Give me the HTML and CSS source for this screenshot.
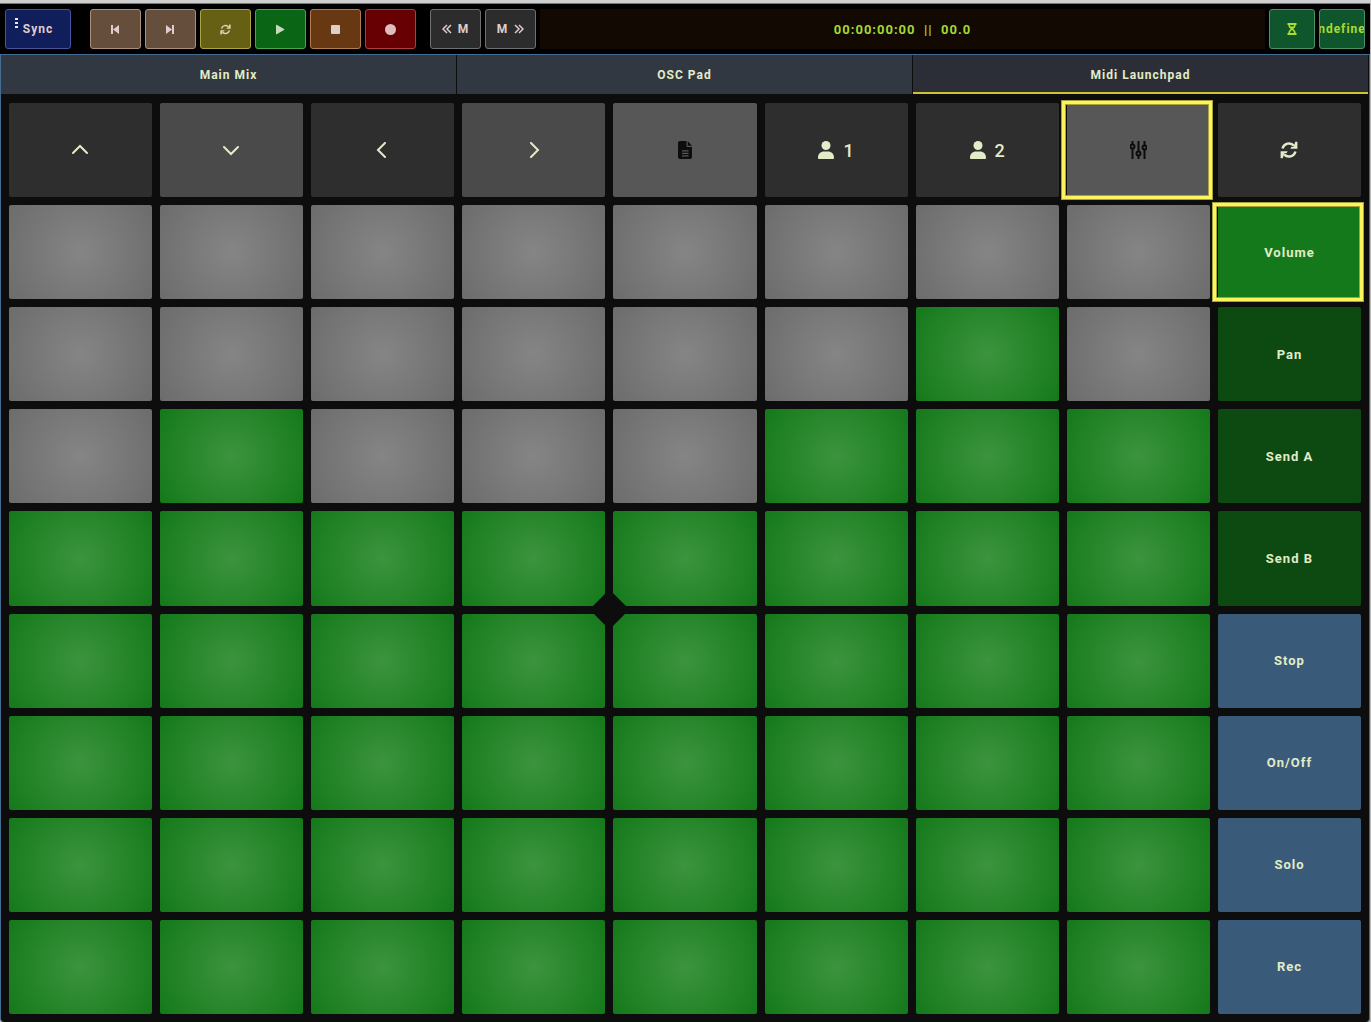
FILE: index.html
```html
<!DOCTYPE html>
<html lang="en">
<head>
<meta charset="utf-8">
<meta name="viewport" content="width=device-width, initial-scale=1">
<title>Midi Launchpad</title>
<link rel="stylesheet" href="styles.css">
</head>
<body>
<svg class="sprite" aria-hidden="true">
  <symbol id="sync" viewBox="0 0 18 18">
    <path d="M2.500 7.500A6.800 6.800 0 0 1 14 4.600M15.500 10.500A6.800 6.800 0 0 1 4 13.400" fill="none" stroke="currentColor" stroke-width="2.400"/>
    <path d="M17.400.8v7H10.300l1.200-2.100h2.300L15.200.8zM.6 17.200v-7h7.100l-1.200 2.100H4.200L2.800 17.200z"/>
  </symbol>
  <symbol id="user" viewBox="0 0 16 18">
    <circle cx="8" cy="4.500" r="4.500"/><path d="M0 18v-1.500C0 12.800 2.700 10.500 6 10.500h4c3.300 0 6 2.300 6 6V17q0 1-1 1H1q-1 0-1-1z"/>
  </symbol>
</svg>
<header class="toolbar">
  <button class="btn sync"><span class="grip"><i></i><i></i><i></i></span>Sync</button>
  <div class="group">
    <button class="btn brown" aria-label="Previous"><svg width="11" height="11" viewBox="0 0 11 11"><path d="M1 1h2v9H1zM9 1v9L3 5.500z"/></svg></button>
    <button class="btn brown" aria-label="Next"><svg width="11" height="11" viewBox="0 0 11 11"><path d="M7 1h2v9H7zM1 1v9l6-4.500z"/></svg></button>
    <button class="btn olive" aria-label="Cycle"><svg width="11" height="11"><use href="#sync"/></svg></button>
    <button class="btn play" aria-label="Play"><svg width="11" height="11" viewBox="0 0 11 11"><path d="M1 1v9q0 .5.600.3l7.500-4.300q.5-.5 0-1L1.600.7Q1 .5 1 1z"/></svg></button>
    <button class="btn stop" aria-label="Stop"><svg width="11" height="11" viewBox="0 0 11 11"><rect x="1" y="1" width="9" height="9" rx="1"/></svg></button>
    <button class="btn record" aria-label="Record"><svg width="11" height="11" viewBox="0 0 11 11"><circle cx="5.500" cy="5.500" r="5.500"/></svg></button>
  </div>
  <div class="group">
    <button class="btn marker" aria-label="Previous marker"><svg class="angles" width="10" height="10" viewBox="0 0 10 10"><path d="M5 1 1 5l4 4M9 1 5 5l4 4"/></svg>M</button>
    <button class="btn marker" aria-label="Next marker">M<svg class="angles" width="10" height="10" viewBox="0 0 10 10"><path d="m1 1 4 4-4 4M5 1l4 4-4 4"/></svg></button>
  </div>
  <output class="timecode">00:00:00:00 &nbsp;|| &nbsp;00.0</output>
  <button class="btn lime" aria-label="Wait"><svg width="10" height="12" viewBox="0 0 10 12"><path fill-rule="evenodd" d="M.5 0h9v2h-.8c0 2-1.200 3-2.500 4 1.300 1 2.500 2 2.500 4h.8v2h-9v-2h.8c0-2 1.200-3 2.500-4C2.500 5 1.300 4 1.300 2H.5zM3 2q.1 1 .6 1.600h2.800Q6.900 3 7 2zM3 10h4Q6.800 8 5 7 3.200 8 3 10z"/></svg></button>
  <button class="btn lime">undefined</button>
</header>
<main class="app">
  <nav class="tabs">
    <button class="tab">Main Mix</button>
    <button class="tab">OSC Pad</button>
    <button class="tab active">Midi Launchpad</button>
  </nav>
  <section class="grid">
    <button class="pad dark" aria-label="Up"><svg class="arrow" width="17" height="16" viewBox="0 0 17 16"><path d="m1 11 7-7 7 7"/></svg></button>
    <button class="pad mid" aria-label="Down"><svg class="arrow" width="17" height="16" viewBox="0 0 17 16"><path d="m1 5 7 7 7-7"/></svg></button>
    <button class="pad dark" aria-label="Left"><svg class="arrow" width="17" height="16" viewBox="0 0 17 16"><path d="M11 1 4 8l7 7"/></svg></button>
    <button class="pad mid" aria-label="Right"><svg class="arrow" width="17" height="16" viewBox="0 0 17 16"><path d="m6 1 7 7-7 7"/></svg></button>
    <button class="pad light" aria-label="Session"><svg width="14" height="18" viewBox="0 0 14 18"><path fill-rule="evenodd" d="M2 0h6.500v5q0 1 1 1H14v10q0 2-2 2H2q-2 0-2-2V2Q0 0 2 0zM9.700 0 14 4.800H9.700zM4 9.200v1.200h6.500V9.200zM4 11.700v1.200h6.500v-1.200zM4 14.200v1.200h6.500v-1.200z"/></svg></button>
    <button class="pad dark user"><svg width="16" height="18"><use href="#user"/></svg>1</button>
    <button class="pad dark user"><svg width="16" height="18"><use href="#user"/></svg>2</button>
    <button class="pad light selected" aria-label="Mixer"><svg class="faders" width="17" height="18" viewBox="0 0 17 18"><path d="M2.500 0v3.500M2.500 8v10M8.500 0v10M8.500 15v3M14.500 0v4.500M14.500 9v9"/><circle cx="2.500" cy="5.500" r="2"/><circle cx="8.500" cy="12.500" r="2"/><circle cx="14.500" cy="6.500" r="2"/></svg></button>
    <button class="pad dark" aria-label="Refresh"><svg width="18" height="18"><use href="#sync"/></svg></button>

    <button class="pad grey"></button><button class="pad grey"></button><button class="pad grey"></button><button class="pad grey"></button><button class="pad grey"></button><button class="pad grey"></button><button class="pad grey"></button><button class="pad grey"></button>
    <button class="pad bright selected">Volume</button>

    <button class="pad grey"></button><button class="pad grey"></button><button class="pad grey"></button><button class="pad grey"></button><button class="pad grey"></button><button class="pad grey"></button><button class="pad green"></button><button class="pad grey"></button>
    <button class="pad forest">Pan</button>

    <button class="pad grey"></button><button class="pad green"></button><button class="pad grey"></button><button class="pad grey"></button><button class="pad grey"></button><button class="pad green"></button><button class="pad green"></button><button class="pad green"></button>
    <button class="pad forest">Send A</button>

    <button class="pad green"></button><button class="pad green"></button><button class="pad green"></button><button class="pad green cut-br"></button><button class="pad green cut-bl"></button><button class="pad green"></button><button class="pad green"></button><button class="pad green"></button>
    <button class="pad forest">Send B</button>

    <button class="pad green"></button><button class="pad green"></button><button class="pad green"></button><button class="pad green cut-tr"></button><button class="pad green cut-tl"></button><button class="pad green"></button><button class="pad green"></button><button class="pad green"></button>
    <button class="pad blue">Stop</button>

    <button class="pad green"></button><button class="pad green"></button><button class="pad green"></button><button class="pad green"></button><button class="pad green"></button><button class="pad green"></button><button class="pad green"></button><button class="pad green"></button>
    <button class="pad blue">On/Off</button>

    <button class="pad green"></button><button class="pad green"></button><button class="pad green"></button><button class="pad green"></button><button class="pad green"></button><button class="pad green"></button><button class="pad green"></button><button class="pad green"></button>
    <button class="pad blue">Solo</button>

    <button class="pad green"></button><button class="pad green"></button><button class="pad green"></button><button class="pad green"></button><button class="pad green"></button><button class="pad green"></button><button class="pad green"></button><button class="pad green"></button>
    <button class="pad blue">Rec</button>
  </section>
</main>
</body>
</html>
```
FILE: styles.css
```css
* { box-sizing: border-box; }

body {
  margin: 0;
  min-height: 100vh;
  display: flex;
  flex-direction: column;
  padding-right: 1px;
  border-top: 3px solid #cfcfcf;
  background: #b9b9b9;
  font-family: Roboto, "Liberation Sans", sans-serif;
  font-weight: 700;
  letter-spacing: 1px;
}

button {
  margin: 0;
  padding: 0;
  border: 0;
  font: inherit;
  letter-spacing: inherit;
  color: inherit;
  display: flex;
  align-items: center;
  justify-content: center;
}

svg { display: block; flex: none; fill: currentColor; }
.sprite { position: absolute; width: 0; height: 0; }

.toolbar {
  display: flex;
  gap: 4px;
  padding: 5px;
  border-top: 1px solid #777;
  background: #000;
}

.group { display: flex; gap: 4px; margin-right: 10px; }
.group + .group { margin-right: 0; }

.btn {
  width: 51px;
  height: 40px;
  border: 1px solid;
  border-radius: 3px;
  font-size: 12px;
  color: #e0cccb;
  overflow: hidden;
}

.sync {
  position: relative;
  width: 66px;
  margin-right: 15px;
  background: #101e5c;
  border-color: #4a529c;
}

.grip {
  position: absolute;
  left: 9px;
  top: 8px;
  display: grid;
  gap: 2px;
}
.grip i { width: 3px; height: 2px; background: #e8e8f0; }

.brown { background: #664e3c; border-color: #a98f7c; }
.olive { background: #666014; border-color: #aaa445; color: #dcd6b4; }
.play { background: #0a6614; border-color: #44a84e; color: #c8d8bc; }
.stop { background: #683812; border-color: #b07c50; }
.record { background: #660002; border-color: #ae3c40; color: #e0bcbc; }
.marker { gap: 6px; background: #2c2c2c; border-color: #707070; }
.angles { fill: none; stroke: currentColor; stroke-width: 1.5; }

.timecode {
  flex: 1;
  display: flex;
  align-items: center;
  justify-content: center;
  background: #120903;
  color: #a4d832;
  font-size: 13px;
}

.lime { width: 46px; background: #10562c; border-color: #4c9068; color: #a8dc32; }

.app {
  flex: 1;
  display: flex;
  flex-direction: column;
  border: 1px solid #426c92;
  border-bottom: 0;
  border-radius: 0 0 4px 4px;
  background: #0d0d0d;
  color: #e2ecc8;
}

.tabs { display: flex; }

.tab {
  flex: 1;
  height: 39px;
  border-right: 1px solid #0d0d0d;
  background: #323842;
  font-size: 12px;
}
.tab.active { background: #2b2e37; box-shadow: inset 0 -2px #cec52c; }

.grid {
  flex: 1;
  display: grid;
  grid-template-columns: repeat(9, 1fr);
  grid-template-rows: repeat(9, 1fr);
  gap: 8px;
  padding: 9px 8px 8px;
}

.pad { border-radius: 2px; font-size: 13px; }
.dark { background: #2e2e2e; }
.mid { background: #4a4a4a; }
.light { background: #575757; color: #0d0d0d; }
.grey { background: radial-gradient(circle, #858585, #6c6c6c); }
.green { background: radial-gradient(circle, #3c943e, #28862b 50%, #14791b); }
.bright { background: #14791b; }
.forest { background: #0c4a11; }
.blue { background: #3a5a79; }

.user { gap: 9px; font-size: 18px; font-weight: 500; letter-spacing: 0; }
.arrow { fill: none; stroke: currentColor; stroke-width: 2; stroke-linecap: round; }
.faders { fill: none; stroke: currentColor; stroke-width: 2; }

.selected { position: relative; }
.selected::after {
  content: "";
  position: absolute;
  inset: -2px -2px -2px -5px;
  border: 3px solid #fcf45c;
  box-shadow: 0 0 0 1px #a8a23c, inset 0 0 0 1px #a8a23c;
}

/* The four middle pads are chamfered towards the centre of the grid. */
.cut-br { clip-path: polygon(-1px -1px, calc(100% + 1px) -1px, calc(100% + 1px) calc(100% - 13px), calc(100% - 13px) calc(100% + 1px), -1px calc(100% + 1px)); }
.cut-bl { clip-path: polygon(-1px -1px, calc(100% + 1px) -1px, calc(100% + 1px) calc(100% + 1px), 13px calc(100% + 1px), -1px calc(100% - 13px)); }
.cut-tr { clip-path: polygon(-1px -1px, calc(100% - 13px) -1px, calc(100% + 1px) 13px, calc(100% + 1px) calc(100% + 1px), -1px calc(100% + 1px)); }
.cut-tl { clip-path: polygon(13px -1px, calc(100% + 1px) -1px, calc(100% + 1px) calc(100% + 1px), -1px calc(100% + 1px), -1px 13px); }
```
